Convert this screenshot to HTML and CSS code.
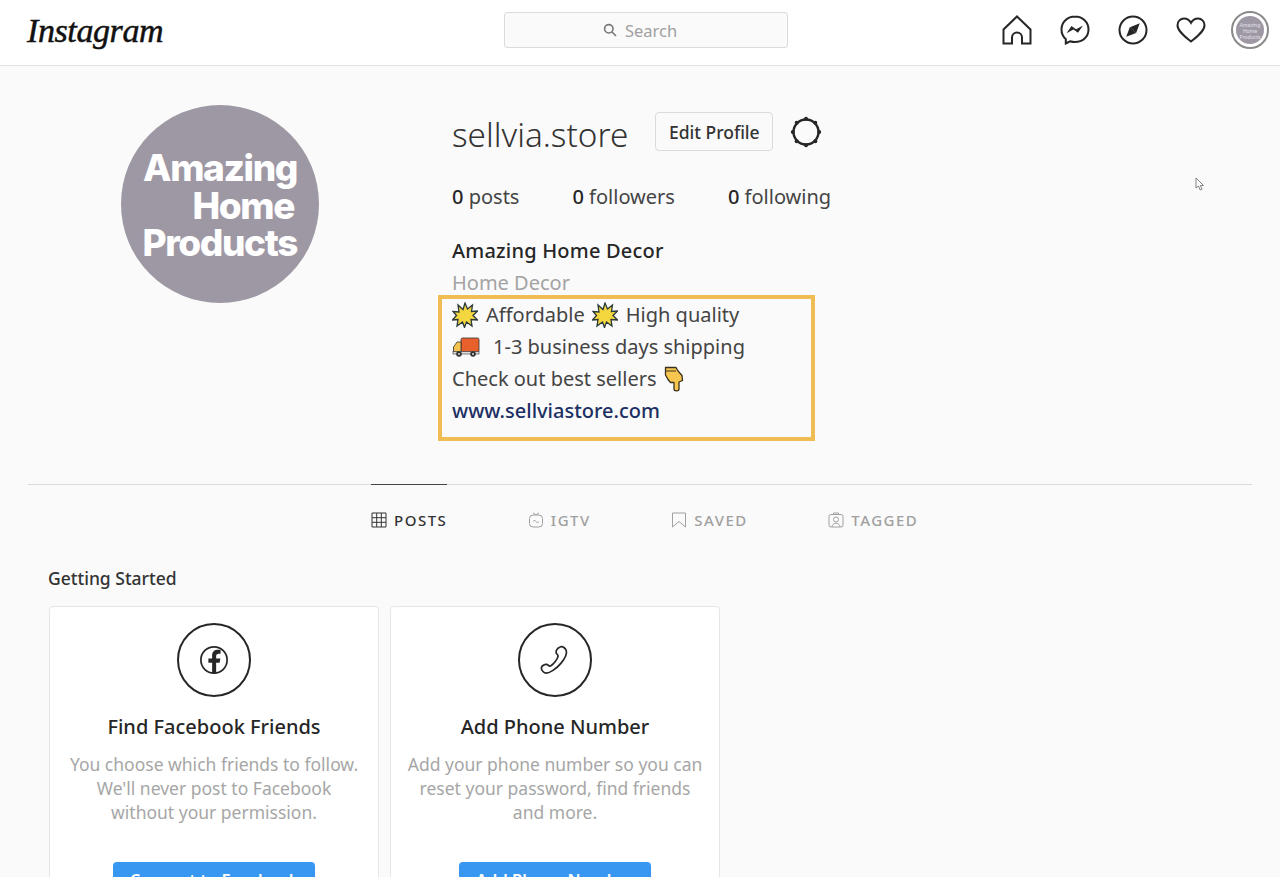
FILE: index.html
```html
<!DOCTYPE html>
<html lang="en">
<head>
    <meta charset="UTF-8">
    <meta name="viewport" content="width=device-width, initial-scale=1.0">
    <title>sellvia.store</title>
    <link rel="stylesheet" href="styles.css">
</head>
<body>

<header class="topbar">
    <div class="logo">Instagram</div>
    <div class="search">
        <svg class="search-icon" viewBox="0 0 14 14"><circle cx="5.8" cy="5.8" r="4.2"/><path d="M9 9l4 4"/></svg>
        <span>Search</span>
    </div>
    <nav class="nav">
        <svg class="nav-icon" viewBox="0 0 30 30"><path d="M15 1.5L28.5 14.5V28.5H20V22.5a5 5 0 0 0-10 0V28.5H1.5V14.5Z"/></svg>
        <svg class="nav-icon" viewBox="0 0 30 30"><path d="M15 1.5C7.4 1.5 1.5 7 1.5 14.5c0 3.9 1.6 7.3 4.3 9.6v4.4l4.3-2.2c1.5.5 3.1.8 4.9.8 7.6 0 13.5-5.1 13.5-12.6S22.600 1.500 15 1.500Z"/><path class="fill" d="M6.500 18.200l5-7.200 4.600 3.300 6.900-3.800-5 7.200-4.600-3.300Z"/></svg>
        <svg class="nav-icon" viewBox="0 0 30 30"><circle cx="15" cy="15" r="13.500"/><path class="fill" d="M21.800 8.200l-3.700 9.900-3.200-3-2.900-2.900Z"/><path class="fill" d="M8.200 21.800l3.700-9.700 6.200 6Z"/></svg>
        <svg class="nav-icon" viewBox="0 0 30 30"><path d="M15 26.500C9 21.500 1.500 16.200 1.500 10.200 1.500 6.200 4.500 3.500 8 3.500c3 0 5.500 1.600 7 4.400 1.500-2.800 4-4.400 7-4.400 3.500 0 6.500 2.700 6.500 6.700 0 6-7.500 11.300-13.500 16.300Z"/></svg>
        <div class="mini-avatar"><div class="mini-inner">Amazing<br>Home<br>Products</div></div>
    </nav>
</header>

<main class="page">
    <section class="profile">
        <div class="avatar-col">
            <div class="avatar">Amazing<br><span class="avatar-home">Home</span><br>Products</div>
        </div>
        <div class="info">
            <div class="name-row">
                <h1 class="username">sellvia.store</h1>
                <button class="edit-btn">Edit Profile</button>
                <svg class="gear" viewBox="0 0 32 32"><circle cx="16" cy="16" r="12.500"/><g class="fill"><circle cx="16" cy="2.800" r="2"/><circle cx="16" cy="29.200" r="2"/><circle cx="2.800" cy="16" r="2"/><circle cx="29.200" cy="16" r="2"/><circle cx="6.700" cy="6.700" r="2"/><circle cx="25.300" cy="6.700" r="2"/><circle cx="6.700" cy="25.300" r="2"/><circle cx="25.300" cy="25.300" r="2"/></g></svg>
            </div>
            <ul class="stats">
                <li><b>0</b> posts</li>
                <li><b>0</b> followers</li>
                <li><b>0</b> following</li>
            </ul>
            <div class="bio-name">Amazing Home Decor</div>
            <div class="bio-cat">Home Decor</div>
            <div class="bio-box">
                <div class="bio-line">
                    <svg class="emoji" viewBox="0 0 26 26"><path class="burst" d="M13 1l2.500 6 5-4-1 6.500 6-.5-4.500 4.500 4.500 4.500-6.500-.5 1 6.500-5.500-4-2 5.500-2-5.500-5.500 4 1-6.500-5.500.5 4-4.500L1 9.500l6 .5-1-7 5 4.500Z"/></svg>
                    <span>Affordable</span>
                    <svg class="emoji emoji-2" viewBox="0 0 26 26"><path class="burst" d="M13 1l2.500 6 5-4-1 6.500 6-.5-4.500 4.500 4.500 4.500-6.500-.5 1 6.500-5.500-4-2 5.500-2-5.500-5.500 4 1-6.500-5.500.5 4-4.500L1 9.500l6 .5-1-7 5 4.500Z"/></svg>
                    <span>High quality</span>
                </div>
                <div class="bio-line">
                    <svg class="emoji emoji-truck" viewBox="0 0 28 22"><rect x="9" y="2" width="18" height="14" rx="1.500" fill="#e8602c" stroke="#333" stroke-width=".8"/><path d="M9 6H5L1.500 11v5H9Z" fill="#f2c14e" stroke="#333" stroke-width=".8"/><rect x="1" y="15.500" width="26" height="2.500" fill="#ddd" stroke="#333" stroke-width=".6"/><circle cx="7" cy="18" r="2.800" fill="#333"/><circle cx="21" cy="18" r="2.800" fill="#333"/><circle cx="7" cy="18" r="1" fill="#ddd"/><circle cx="21" cy="18" r="1" fill="#ddd"/></svg>
                    <span>1-3 business days shipping</span>
                </div>
                <div class="bio-line">
                    <span>Check out best sellers</span>
                    <svg class="emoji emoji-hand" viewBox="0 0 20 26"><path d="M1.500 1.500H12l2 3.500 4 4.500.5 5-3.500 1.500V23c0 2.500-5 2.500-5 0V16.500H6.500L4 13.500 1.500 9Z" fill="#f7c64f" stroke="#3a3020" stroke-width="1.300" stroke-linejoin="round"/><path d="M2 5h10" stroke="#3a3020" stroke-width="1" fill="none"/></svg>
                </div>
                <a class="bio-link" href="#">www.sellviastore.com</a>
            </div>
        </div>
    </section>

    <div class="tabs">
        <div class="tab active">
            <svg viewBox="0 0 16 16"><path d="M1 1h14v14H1ZM1 5.700h14M1 10.300h14M5.700 1v14M10.300 1v14"/></svg>
            <span>Posts</span>
        </div>
        <div class="tab">
            <svg viewBox="0 0 16 16"><rect x="1.500" y="3" width="13" height="12" rx="3.500"/><path d="M5 .8L8 3l3-2.200M5 9.500c1-1.300 2-1.300 3 0s2 1.300 3 0"/></svg>
            <span>IGTV</span>
        </div>
        <div class="tab">
            <svg viewBox="0 0 16 16"><path d="M1.500 1h13v14L8 9.500 1.500 15Z"/></svg>
            <span>Saved</span>
        </div>
        <div class="tab">
            <svg viewBox="0 0 16 16"><rect x="1" y="2.500" width="14" height="12.500" rx="2"/><circle cx="8" cy="7.500" r="2.500"/><path d="M4 15c0-5 8-5 8 0M5.500 2.500V1h5v1.500"/></svg>
            <span>Tagged</span>
        </div>
    </div>

    <section class="started">
        <h2 class="started-title">Getting Started</h2>
        <div class="cards">
            <div class="card">
                <div class="card-icon">
                    <svg class="fb-icon" viewBox="0 0 32 32"><circle cx="16" cy="16" r="14"/><path class="fill" d="M14 30V19h-4v-4.500h4V11c0-4 2.500-6 6-6 1.600 0 3 .2 3 .2v4h-2c-2 0-2.700 1.100-2.700 2.500v2.800h4.500L22 19h-3.700v11Z"/></svg>
                </div>
                <h3 class="card-title">Find Facebook Friends</h3>
                <p class="card-text">You choose which friends to follow. We'll never post to Facebook without your permission.</p>
                <button class="card-btn">Connect to Facebook</button>
            </div>
            <div class="card">
                <div class="card-icon">
                    <svg viewBox="0 0 32 32"><path d="M22 1.800c2.200-.8 5.200 1.800 6 4 .6 2-.2 7-5.500 13.500C17 26 10 29.800 7 30c-2.700.2-5.700-3-5.500-5.500.1-1.700 2.500-3.300 4.500-3.800 1.300-.3 2.200.2 3 1 .8.900 1.700 1 3 .2 2.500-1.600 6.500-6.700 7.200-9.500.3-1.300-.2-2-1.200-2.900-1-1-1.100-2-.7-3.300.6-1.800 2.700-3.700 4.700-4.400Z"/></svg>
                </div>
                <h3 class="card-title">Add Phone Number</h3>
                <p class="card-text">Add your phone number so you can reset your password, find friends and more.</p>
                <button class="card-btn">Add Phone Number</button>
            </div>
        </div>
    </section>
</main>

<svg class="cursor" viewBox="0 0 10 14"><path d="M1 1v10l2.500-2 1.700 4 1.800-.8L5.300 8.500H8.500Z"/></svg>

</body>
</html>
```

FILE: styles.css
```css
*{
    box-sizing: border-box;
}
html, body{
    height: 877px;
    overflow: hidden;
}
body{
    margin: 0;
    position: relative;
    background-color: #fafafa;
    color: #262626;
    font-family: "Noto Sans", "Open Sans", sans-serif;
}
svg{
    fill: none;
    stroke: #262626;
}
svg .fill, svg .fill circle{
    fill: #262626;
    stroke: none;
}

/* -----------------------------TOPBAR------------------------------ */
.topbar{
    height: 66px;
    display: flex;
    align-items: center;
    padding: 0 11px 0 27px;
    background-color: #fff;
    border-bottom: 1px solid #e2e2e2;
}
.logo{
    width: 477px;
    font-family: "Liberation Serif", serif;
    font-style: italic;
    font-size: 34px;
    line-height: 40px;
    letter-spacing: -.4px;
    color: #111;
    -webkit-text-stroke: .5px #111;
    margin-top: -4px;
}
.search{
    width: 284px;
    height: 36px;
    margin-top: -5px;
    padding-right: 12px;
    display: flex;
    align-items: center;
    justify-content: center;
    gap: 8px;
    background-color: #fafafa;
    border: 1px solid #dbdbdb;
    border-radius: 3px;
    color: #a0a0a0;
    font-size: 16.500px;
}
.search-icon{
    width: 14px;
    height: 14px;
    stroke: #777;
    stroke-width: 1.600;
}
.nav{
    display: flex;
    align-items: center;
    gap: 28px;
    margin: -5px 0 0 auto;
}
.nav-icon{
    width: 30px;
    height: 30px;
    stroke-width: 2;
}
.mini-avatar{
    width: 38px;
    height: 38px;
    margin-left: -3px;
    padding: 3px;
    border: 2px solid #8a8a8a;
    border-radius: 50%;
}
.mini-inner{
    width: 100%;
    height: 100%;
    padding-top: 6px;
    border-radius: 50%;
    background-color: #9e98a5;
    color: #e6e3e8;
    font-size: 5px;
    line-height: 6px;
    text-align: center;
}

/* -----------------------------PROFILE------------------------------ */
.page{
    padding: 0 28px;
}
.profile{
    display: flex;
    height: 418px;
}
.avatar-col{
    width: 424px;
    padding: 39px 0 0 93px;
}
.avatar{
    width: 198px;
    height: 198px;
    padding: 44px 22px 0 0;
    border-radius: 50%;
    background-color: #9e98a5;
    color: #fff;
    font-family: Inter, "Liberation Sans", sans-serif;
    font-weight: 800;
    font-size: 37px;
    line-height: 37.500px;
    letter-spacing: -1.400px;
    text-align: right;
    white-space: nowrap;
}
.avatar-home{
    margin-right: 3px;
}
.info{
    padding-top: 46px;
}
.name-row{
    display: flex;
    align-items: center;
    height: 39px;
}
.username{
    margin: 0 27px 0 0;
    font-weight: 300;
    font-size: 33.300px;
    line-height: 45px;
    color: #333;
    position: relative;
    top: 3px;
}
.edit-btn{
    width: 118px;
    height: 39px;
    padding: 0;
    background-color: #fafafa;
    border: 1px solid #dbdbdb;
    border-radius: 4px;
    color: #333;
    font-family: inherit;
    font-weight: 500;
    font-size: 17.500px;
}
.gear{
    width: 32px;
    height: 32px;
    margin-left: 17px;
    stroke-width: 2.400;
}
.stats{
    display: flex;
    gap: 53px;
    list-style: none;
    margin: 30px 0 0;
    padding: 0;
    font-size: 20px;
    line-height: 32px;
    color: #444;
}
.stats b{
    font-weight: 500;
    color: #262626;
}
.bio-name{
    margin-top: 22px;
    font-weight: 500;
    font-size: 20px;
    line-height: 32px;
    letter-spacing: .2px;
}
.bio-cat{
    font-size: 20px;
    line-height: 32px;
    color: #a3a3a3;
}
.bio-box{
    width: 377px;
    height: 146px;
    margin: -4px 0 0 -14px;
    padding: 0 0 0 10px;
    border: 4px solid #f0bd55;
    font-size: 20px;
    line-height: 32px;
    color: #444;
}
.bio-line{
    display: flex;
    align-items: center;
    height: 32px;
}
.emoji{
    width: 26px;
    height: 26px;
    flex: none;
    margin-right: 8px;
    stroke: none;
}
.emoji-2{
    margin-left: 7px;
}
.burst{
    fill: #f4d63e;
    stroke: #2b3a3a;
    stroke-width: 1.300;
}
.emoji-truck{
    width: 28px;
    height: 22px;
    margin-right: 13px;
}
.emoji-hand{
    width: 20px;
    height: 26px;
    margin: 0 0 0 7px;
}
.bio-link{
    display: block;
    font-weight: 500;
    color: #1c2f63;
    text-decoration: none;
}

/* -----------------------------TABS------------------------------ */
.tabs{
    display: flex;
    gap: 80.500px;
    height: 82px;
    padding-left: 343px;
    border-top: 1px solid #dbdbdb;
}
.tab{
    display: flex;
    align-items: center;
    gap: 7px;
    height: 70px;
    margin-top: -1px;
    border-top: 1px solid transparent;
    color: #a0a0a0;
    font-weight: 500;
    font-size: 15px;
    letter-spacing: 1.500px;
    text-transform: uppercase;
}
.tab svg{
    width: 16px;
    height: 16px;
    stroke: #a0a0a0;
}
.tab.active{
    border-top-color: #444;
    color: #333;
}
.tab.active svg{
    stroke: #333;
}

/* -----------------------------GETTING STARTED------------------------------ */
.started{
    padding: 0 0 0 21px;
}
.started-title{
    margin: 0 0 16px -1px;
    font-weight: 500;
    font-size: 17.500px;
    line-height: 24px;
    color: #333;
}
.cards{
    display: flex;
    gap: 11px;
}
.card{
    width: 330px;
    height: 320px;
    padding: 16px 16px 0;
    display: flex;
    flex-direction: column;
    align-items: center;
    background-color: #fff;
    border: 1px solid #e6e6e6;
    border-radius: 4px;
    text-align: center;
}
.card-icon{
    width: 74px;
    height: 74px;
    display: flex;
    align-items: center;
    justify-content: center;
    border: 2px solid #262626;
    border-radius: 50%;
}
.card-icon svg{
    width: 30px;
    height: 30px;
    stroke-width: 1.800;
}
.card-title{
    margin: 16px 0 0;
    font-weight: 500;
    font-size: 20px;
    line-height: 28px;
}
.card-text{
    margin: 11px 0 0;
    font-size: 17.500px;
    line-height: 24px;
    color: #a6a6a6;
}
.card-btn{
    margin-top: 38px;
    padding: 0 17px;
    height: 34px;
    flex: none;
    background-color: #3897f0;
    border: none;
    border-radius: 4px;
    color: #fff;
    font-family: inherit;
    font-weight: 600;
    font-size: 16.500px;
    white-space: nowrap;
}

.cursor{
    position: absolute;
    left: 1195px;
    top: 177px;
    width: 10px;
    height: 14px;
    fill: #fff;
    stroke: #666;
    stroke-width: .8;
}
```
